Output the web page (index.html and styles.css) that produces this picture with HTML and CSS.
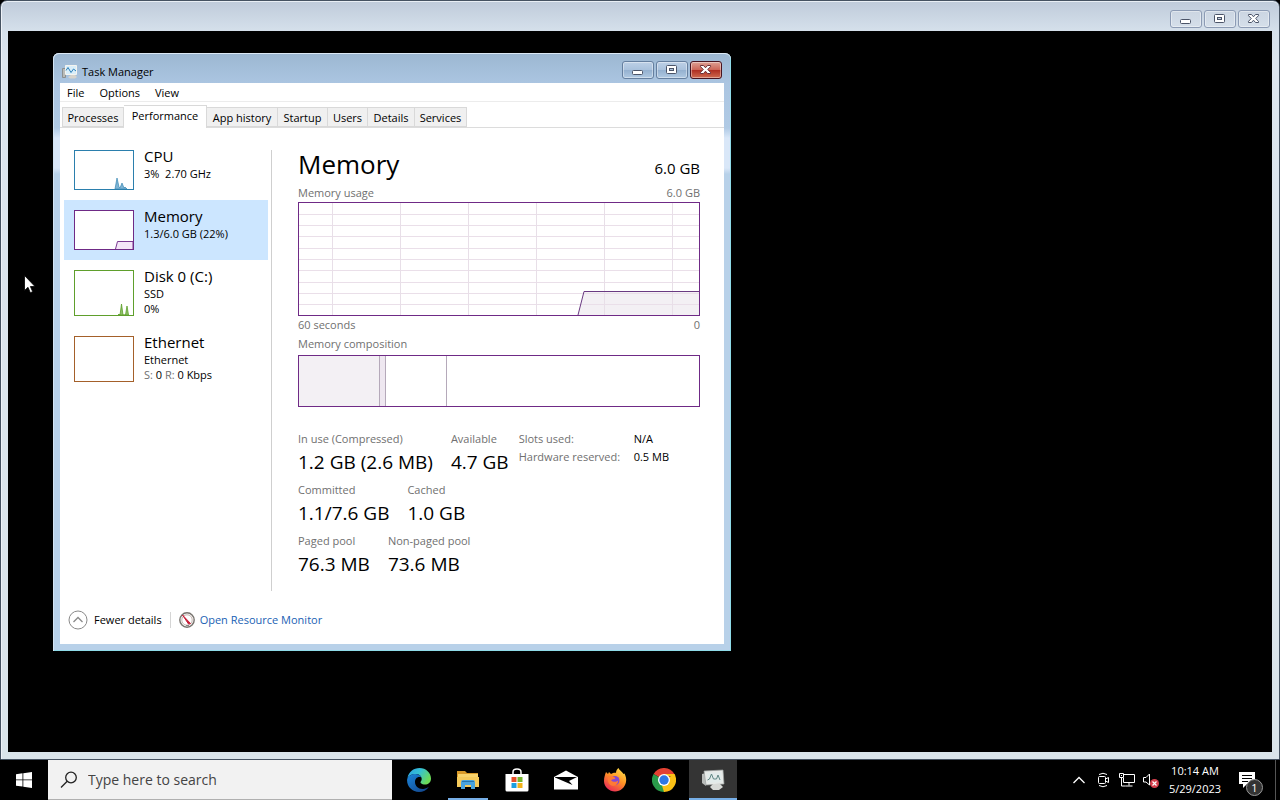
FILE: index.html
```html
<!DOCTYPE html>
<html lang="en">
<head>
    <meta charset="UTF-8">
    <meta name="viewport" content="width=device-width, initial-scale=1.0">
    <title>Task Manager</title>
    <link rel="stylesheet" href="styles.css">
</head>
<body>
    <main class="outer-window">
        <header class="outer-titlebar">
            <div class="window-controls">
                <button class="control" aria-label="Minimize">
                    <svg width="13" height="12" viewBox="0 0 13 12"><rect x="1.5" y="6.5" width="10" height="4" rx="1" fill="#fff" stroke="#4b5468"/></svg>
                </button>
                <button class="control" aria-label="Maximize">
                    <svg width="13" height="12" viewBox="0 0 13 12"><rect x="1.5" y="1.5" width="10" height="8" rx="1" fill="#fff" stroke="#4b5468"/><rect x="4.5" y="4.5" width="4" height="2" fill="#c8d4e2" stroke="#4b5468"/></svg>
                </button>
                <button class="control" aria-label="Close">
                    <svg width="13" height="12" viewBox="0 0 13 12"><path d="M1.5 1.5h3l2 2.3 2-2.3h3v1.2L8.7 5.5l2.8 2.8v1.2h-3l-2-2.3-2 2.3h-3V8.300l2.800-2.800-2.800-2.800z" fill="#fff" stroke="#4b5468"/></svg>
                </button>
            </div>
        </header>
        <div class="desktop">
            <section class="task-manager">
                <header class="titlebar">
                    <svg class="app-icon" width="16" height="16" viewBox="0 0 16 16">
                        <path d="M0.500 4.500h3v9h-3z" fill="#b9bbb8" stroke="#8c8f8e"/>
                        <path d="M3.500 1.500h11v9h-11z" fill="#d8eefa" stroke="#f4f4ef"/>
                        <path d="M4 6.500l2-3 3 5 2.500-3.500L14 7" fill="none" stroke="#2b7fb8"/>
                        <path d="M6 13l3-2h4l2 2-2 1.500H8z" fill="#d6d4cd"/>
                    </svg>
                    <h1>Task Manager</h1>
                    <div class="window-controls">
                        <button class="control" aria-label="Minimize">
                            <svg width="13" height="12" viewBox="0 0 13 12"><rect x="1.5" y="6.5" width="10" height="4" rx="1" fill="#fff" stroke="#4b5468"/></svg>
                        </button>
                        <button class="control" aria-label="Maximize">
                            <svg width="13" height="12" viewBox="0 0 13 12"><rect x="1.5" y="1.5" width="10" height="8" rx="1" fill="#fff" stroke="#4b5468"/><rect x="4.5" y="4.5" width="4" height="2" fill="#a9bfd8" stroke="#4b5468"/></svg>
                        </button>
                        <button class="control close" aria-label="Close">
                            <svg width="13" height="12" viewBox="0 0 13 12"><path d="M1.5 1.5h3l2 2.3 2-2.3h3v1.2L8.7 5.5l2.8 2.8v1.2h-3l-2-2.3-2 2.3h-3V8.300l2.800-2.800-2.800-2.800z" fill="#fff" stroke="#6b3038"/></svg>
                        </button>
                    </div>
                </header>

                <div class="client">
                    <nav class="menu">
                        <button>File</button>
                        <button>Options</button>
                        <button>View</button>
                    </nav>
                    <div class="tabs" role="tablist">
                        <button role="tab">Processes</button>
                        <button role="tab" class="active" aria-selected="true">Performance</button>
                        <button role="tab">App history</button>
                        <button role="tab">Startup</button>
                        <button role="tab">Users</button>
                        <button role="tab">Details</button>
                        <button role="tab">Services</button>
                    </div>

                    <div class="content">
                        <aside class="resources">
                            <button class="resource">
                                <svg class="thumb cpu" viewBox="0 0 58 38"><path d="M40 38l2-11 2 9 1 1 2-5 2 5 1-1 2 2z" fill="#7fb4d4" stroke="#3a88b4" stroke-width=".7"/></svg>
                                <span class="resource-text"><strong>CPU</strong><span>3%&nbsp; 2.70 GHz</span></span>
                            </button>
                            <button class="resource selected">
                                <svg class="thumb memory" viewBox="0 0 58 38"><path d="M40.500 38l2-7.500H58V38" fill="#f4e6f8" stroke="#7b3a93"/></svg>
                                <span class="resource-text"><strong>Memory</strong><span>1.3/6.0 GB (22%)</span></span>
                            </button>
                            <button class="resource tall">
                                <svg class="thumb disk" viewBox="0 0 58 44"><path d="M43 44l1-1 1 1 1.500-11L48 44h2.500L52 35l1.500 9z" fill="#8fbf68" stroke="#5da02a" stroke-width=".8"/></svg>
                                <span class="resource-text"><strong>Disk 0 (C:)</strong><span>SSD</span><span>0%</span></span>
                            </button>
                            <button class="resource tall">
                                <svg class="thumb ethernet" viewBox="0 0 58 44"></svg>
                                <span class="resource-text"><strong>Ethernet</strong><span>Ethernet</span><span><i>S:</i> 0 <i>R:</i> 0 Kbps</span></span>
                            </button>
                        </aside>

                        <section class="details">
                            <div class="heading">
                                <h2>Memory</h2>
                                <span>6.0 GB</span>
                            </div>
                            <div class="caption"><span>Memory usage</span><span>6.0 GB</span></div>
                            <svg class="usage" viewBox="0 0 400 112" preserveAspectRatio="none">
                                <path d="M279 112l6-23.500H400V112z" fill="#f3f0f4"/>
                                <path d="M0 11.500h400M0 22.500h400M0 33.500h400M0 45.500h400M0 56.500h400M0 67.500h400M0 79.500h400M0 90.500h400M0 101.500h400" stroke="#eadfe9"/>
                                <path d="M33.500 0v112M101.500 0v112M169.500 0v112M237.500 0v112M305.500 0v112M373.500 0v112" stroke="#e8dfe8"/>
                                <path d="M279 112l6-23.500H400" fill="none" stroke="#6a3a82"/>
                            </svg>
                            <div class="caption below"><span>60 seconds</span><span>0</span></div>
                            <div class="caption">Memory composition</div>
                            <div class="composition">
                                <div class="in-use"></div>
                                <div class="modified"></div>
                                <div class="standby"></div>
                            </div>

                            <div class="stats">
                                <div class="stats-main">
                                    <dl>
                                        <div><dt>In use (Compressed)</dt><dd>1.2 GB (2.6 MB)</dd></div>
                                        <div><dt>Available</dt><dd>4.7 GB</dd></div>
                                    </dl>
                                    <dl>
                                        <div><dt>Committed</dt><dd>1.1/7.6 GB</dd></div>
                                        <div><dt>Cached</dt><dd>1.0 GB</dd></div>
                                    </dl>
                                    <dl>
                                        <div><dt>Paged pool</dt><dd>76.3 MB</dd></div>
                                        <div><dt>Non-paged pool</dt><dd>73.6 MB</dd></div>
                                    </dl>
                                </div>
                                <table class="hardware">
                                    <tr><th scope="row">Slots used:</th><td>N/A</td></tr>
                                    <tr><th scope="row">Hardware reserved:</th><td>0.5 MB</td></tr>
                                </table>
                            </div>
                        </section>
                    </div>

                    <footer class="bottom-bar">
                        <button class="fewer">
                            <svg width="20" height="20" viewBox="0 0 20 20" fill="none" stroke="#8a8a8a"><circle cx="10" cy="10" r="9"/><path d="M5.500 12L10 7.500l4.500 4.500" stroke-width="1.300"/></svg>
                            Fewer details
                        </button>
                        <a href="#" class="monitor">
                            <svg width="16" height="16" viewBox="0 0 16 16"><circle cx="8" cy="8" r="7.200" fill="#f5f4f2" stroke="#77736e" stroke-width="1.400"/><circle cx="8" cy="8" r="5.200" fill="#fff" stroke="#c9b9b6"/><path d="M3.500 3l8 8.500-2 .5z" fill="#c8203a" stroke="#c8203a"/><path d="M7 13.500h3" stroke="#888"/></svg>
                            Open Resource Monitor
                        </a>
                    </footer>
                </div>
            </section>

            <svg class="cursor" width="12" height="19" viewBox="0 0 12 19"><path d="M.5.500v15l3.500-3.200 2.300 5.400 2.400-1-2.300-5.200h4.600z" fill="#fff" stroke="#000" stroke-width=".8"/></svg>
        </div>
    </main>

    <footer class="taskbar">
        <button class="start" aria-label="Start">
            <svg width="16" height="16" viewBox="0 0 16 16" fill="#fff"><path d="M0 2.200L6.500 1.300v6.200H0zM7.300 1.200L16 0v7.500H7.300zM0 8.300h6.500v6.300L0 13.700zM7.300 8.300H16V16l-8.700-1.200z"/></svg>
        </button>
        <label class="search">
            <svg width="18" height="18" viewBox="0 0 18 18" fill="none" stroke="#222" stroke-width="1.300"><circle cx="11" cy="6.500" r="5.300"/><path d="M7.200 10.300L1 16.500"/></svg>
            <input type="text" placeholder="Type here to search" aria-label="Search">
        </label>
        <nav class="apps">
            <button aria-label="Edge">
                <svg width="24" height="24" viewBox="0 0 24 24">
                    <defs>
                        <linearGradient id="edgeTop" x1="0" y1="0" x2="1" y2=".5"><stop offset="0" stop-color="#2d9fe4"/><stop offset=".5" stop-color="#35c1d5"/><stop offset="1" stop-color="#6bdb58"/></linearGradient>
                        <linearGradient id="edgeLow" x1="0" y1="0" x2="1" y2="1"><stop offset="0" stop-color="#1b86dc"/><stop offset="1" stop-color="#123f83"/></linearGradient>
                    </defs>
                    <path d="M.5 10C1.500 4 6.500 0 12.500 0 19 0 24 5 24 10.500c0 4-3 6-6 6-3.500 0-4.500-1.500-4.500-2.200 0-.8 1.200-1.300 1.200-3.300C14.700 8 12 6 8.500 6 5 6 2 7.500.5 10z" fill="url(#edgeTop)"/>
                    <path d="M.2 11C1 8 4.500 6 8.500 6c3 0 5.200 1.500 6 3.500-4-1.500-6.500 1.300-6.500 4.500 0 4.500 4.500 8 9.500 6.700 1.700-.4 3-1.200 4.400-2-2 3.500-6 5.300-9.900 5.300C5 24-.8 18 .2 11z" fill="url(#edgeLow)"/>
                </svg>
            </button>
            <button class="running" aria-label="File Explorer">
                <svg width="22" height="20" viewBox="0 0 22 20"><path d="M0 1h8l2 2h11v5H0z" fill="#d99a28"/><path d="M1 4h20v13H1z" fill="#f8d36c"/><path d="M0 7h22v10H0z" fill="#f5ca5b"/><path d="M4 19v-7q0-2 2-2h10q2 0 2 2v7h-4v-4H8v4z" fill="#49a3dd"/><path d="M5 11.500h12" stroke="#2474ad"/></svg>
            </button>
            <button aria-label="Microsoft Store">
                <svg width="24" height="24" viewBox="0 0 24 24"><path d="M8 7V4q0-3 4-3t4 3v3" fill="none" stroke="#fff" stroke-width="1.500"/><path d="M.5 6h23v16q0 1.500-1.500 1.500H2Q.5 23.500.5 22z" fill="#fff"/><path d="M6.500 9h5v5h-5z" fill="#e8502b"/><path d="M12.500 9h5v5h-5z" fill="#75b52b"/><path d="M6.500 15h5v5h-5z" fill="#1c9fe0"/><path d="M12.500 15h5v5h-5z" fill="#f2b21a"/></svg>
            </button>
            <button aria-label="Mail">
                <svg width="24" height="20" viewBox="0 0 24 20"><path d="M0 7L12 .5 24 7v12.500H0z" fill="#fff"/><path d="M1 7h22l-8 4 3.500 4L1 7.500z" fill="#000"/></svg>
            </button>
            <button aria-label="Firefox">
                <svg width="24" height="24" viewBox="0 0 24 24">
                    <defs><linearGradient id="fox" x1=".8" y1="0" x2=".2" y2="1"><stop offset="0" stop-color="#ffe04b"/><stop offset=".45" stop-color="#ff9224"/><stop offset="1" stop-color="#e8225d"/></linearGradient></defs>
                    <path d="M3 4l2 2 1-2 2 2c2-1.500 4-1.500 5-1.200C13 2 14.500 1 15.500 0c.5 2 3.500 3.500 5 6l1-.5C23 8.500 23.500 11 23 14c-1 5.500-5.500 9.500-11 9.500S1 19 1 13C1 9 2 7 3 4z" fill="url(#fox)"/>
                    <circle cx="12" cy="12.500" r="4.500" fill="#8448d4"/>
                    <path d="M5 9c3-1 5-1 7.500 1.200-1 1.300-3.500.8-4.300 2 1.300 2 4.800 2.300 7 .3-.5 4-3 5.500-5.500 5.300C6 17.500 4 13 5 9z" fill="#ff7a35"/>
                </svg>
            </button>
            <button aria-label="Chrome">
                <svg width="24" height="24" viewBox="0 0 24 24"><path d="M12 12L1.600 6A12 12 0 0 1 22.400 6z" fill="#e34132"/><path d="M12 12L22.400 6A12 12 0 0 1 12 24z" fill="#fbc116"/><path d="M12 12v12A12 12 0 0 1 1.600 6z" fill="#2a9b4a"/><path d="M12 6h10.400a12 12 0 0 1 .9 2H12z" fill="#fbc116"/><path d="M17.200 15L12 24l-2-6.500z" fill="#fbc116"/><circle cx="12" cy="12" r="6" fill="#fff"/><circle cx="12" cy="12" r="4.700" fill="#2f77e4"/></svg>
            </button>
            <button class="running current" aria-label="Task Manager">
                <svg width="24" height="22" viewBox="0 0 24 22"><path d="M1 5l4-1v13l-4-3z" fill="#b9bcba"/><path d="M3 2l19-1 1 14-18 1z" fill="#e6e9e7" stroke="#9ba09f" stroke-width=".7"/><path d="M6 4l14-.7.600 9.700L7 14z" fill="#e2ebea"/><path d="M6.500 11l2-1 2-5 2 5 3 0 1.500-4 2 5" fill="none" stroke="#5f8784"/><path d="M9 18l3-3h7l3 3-4 3h-6z" fill="#d7d9d6"/></svg>
            </button>
        </nav>
        <div class="tray">
            <button aria-label="Show hidden icons"><svg width="14" height="16" viewBox="0 0 14 16" fill="none" stroke="#fff" stroke-width="1.300"><path d="M1.500 11L7 5.500l5.500 5.500"/></svg></button>
            <button aria-label="Meet Now"><svg width="16" height="16" viewBox="0 0 16 16" fill="none" stroke="#fff"><rect x="3.500" y="4.500" width="7" height="7" rx="1"/><path d="M10.500 7l3-1.500v5l-3-1.500M4 2.500Q8 0 12 2.500M4 13.500q4 2.500 8 0"/></svg></button>
            <button aria-label="Network"><svg width="18" height="16" viewBox="0 0 18 16" fill="none" stroke="#fff"><path d="M6 2.500h10.500v8H5.500V6M11 10.500v3M7.500 14h7"/><path d="M1.500 1.500h4v4h-4zM3.500 5.500V14h4M3.500 3v1"/></svg></button>
            <button aria-label="Volume"><svg width="18" height="16" viewBox="0 0 18 16"><path d="M1.500 5.500H4l3.500-3.500v11L4 10H1.500z" fill="none" stroke="#fff"/><circle cx="12.500" cy="11.500" r="4.500" fill="#d43f4c"/><path d="M10.500 9.500l4 4M14.500 9.500l-4 4" stroke="#fff" stroke-width="1.200"/></svg></button>
            <button class="clock"><span>10:14 AM</span><span>5/29/2023</span></button>
            <button class="notifications" aria-label="Notifications">
                <svg width="18" height="18" viewBox="0 0 18 18"><path d="M1 1h16v12H9l-4 4v-4H1z" fill="#fff"/><path d="M4 4.500h10M4 7.500h10M4 10.500h6" stroke="#000"/></svg>
                <span class="badge">1</span>
            </button>
        </div>
    </footer>
</body>
</html>
```

FILE: styles.css
```css
:root {
    --purple: #6f2a86;
    --label: #707070;
}

* {
    box-sizing: border-box;
    margin: 0;
    padding: 0;
}

body {
    display: flex;
    flex-direction: column;
    height: 100vh;
    overflow: hidden;
    background: #000;
    font-family: "Open Sans", "Noto Sans", sans-serif;
    font-size: 11px;
    line-height: 16px;
    color: #000;
}

button,
input {
    font: inherit;
    color: inherit;
    background: none;
    border: none;
}

svg {
    display: block;
    flex: none;
}

/* Outer window */
.outer-window {
    flex: 1;
    display: flex;
    flex-direction: column;
    padding: 0 7px 7px;
    background: linear-gradient(#bfcbda, #d5e0eb 30px, #dce5ee 60px, #dae4ea);
    border: 1px solid #465362;
    border-radius: 7px 7px 0 0;
    box-shadow: inset 0 1px #e9eff5, inset 1px 0 #eef2f8;
}

.outer-titlebar {
    display: flex;
    justify-content: flex-end;
    height: 30px;
    padding: 9px 2px 0 0;
}

.window-controls {
    display: flex;
    gap: 2px;
}

.control {
    display: flex;
    align-items: center;
    justify-content: center;
    width: 32px;
    height: 18px;
    padding: 0 1px 1px 0;
    border: 1px solid #8c9bb4;
    border-radius: 3px;
    background: linear-gradient(#cbd5e2, #d5dfea);
    box-shadow: inset 0 0 0 1px rgba(255, 255, 255, 0.4);
}

.desktop {
    position: relative;
    flex: 1;
    background: #000;
}

.cursor {
    position: absolute;
    left: 16px;
    top: 244px;
}

/* Task Manager window */
.task-manager {
    position: absolute;
    left: 45px;
    top: 22px;
    width: 678px;
    height: 598px;
    display: flex;
    flex-direction: column;
    padding: 0 7px 7px;
    background: linear-gradient(#9cb7d1, #abc5e1 30px, #b0cae5 75px, #d9e7f8 85px, #d9e7f8 115px, #b8d1e9 121px, #b8d1e9);
    border-radius: 6px 6px 0 0;
    box-shadow: inset 0 1px #dce9f5, inset 1px 0 #d3e4f3, inset -1px -1px #8fdbe8;
}

.titlebar {
    display: flex;
    align-items: flex-start;
    height: 30px;
    padding: 9px 2px 0;
}

.titlebar .window-controls {
    margin-top: -1px;
}

.app-icon {
    margin-top: 2px;
}

.titlebar h1 {
    flex: 1;
    margin: 2px 0 0 4px;
    font-size: 11px;
    font-weight: 400;
    line-height: 16px;
}

.task-manager .control {
    border-color: #657f9f;
    background: linear-gradient(#bdd0e6, #a9c1dc 50%, #94b0cf 50%, #b0c9e2);
}

.task-manager .control.close {
    border-color: #481420;
    background: linear-gradient(#dda094, #cc6456 50%, #ae2c20 50%, #cf6b50);
}

.client {
    flex: 1;
    display: flex;
    flex-direction: column;
    background: #fff;
}

.menu {
    display: flex;
    gap: 15px;
    height: 19px;
    padding: 2px 7px 0;
    border-bottom: 1px solid #ececec;
}

.tabs {
    display: grid;
    grid-template-columns: 62px 83px 71px 50px 40px 47px 52px;
    align-items: end;
    height: 26px;
    padding-left: 2px;
    border-bottom: 1px solid #dcdcdc;
}

.tabs button {
    height: 20px;
    padding-top: 1px;
    white-space: nowrap;
    background: #f0f0f0;
    border: 1px solid #d9d9d9;
    border-left: none;
}

.tabs button:first-child {
    border-left: 1px solid #d9d9d9;
}

.tabs .active {
    height: 23px;
    margin-bottom: -1px;
    padding-bottom: 3px;
    background: #fff;
    border-bottom: none;
}

.content {
    flex: 1;
    display: flex;
}

.resources {
    width: 212px;
    margin: 22px 0 0;
    padding-left: 4px;
    border-right: 1px solid #cfcfcf;
}

.resource {
    display: flex;
    gap: 10px;
    width: 204px;
    height: 60px;
    padding: 10px;
    text-align: left;
}

.resource:first-child {
    margin-top: -10px;
}

.resource.tall {
    height: 66px;
}

.resource.selected {
    background: #cce6ff;
}

.thumb {
    width: 60px;
    height: 40px;
    background: #fff;
    border: 1px solid;
}

.tall .thumb {
    height: 46px;
}

.cpu { border-color: #2b7fad; }
.memory { border-color: var(--purple); }
.disk { border-color: #5f9f2c; }
.ethernet { border-color: #a4602a; }

.resource-text {
    display: flex;
    flex-direction: column;
    line-height: 15px;
}

.resource-text strong {
    height: 16px;
    font-size: 15px;
    font-weight: 400;
    line-height: 12px;
}

.resource-text i {
    font-style: normal;
    color: var(--label);
}

.details {
    flex: 1;
    padding: 18px 24px 0 26px;
}

.heading {
    display: flex;
    justify-content: space-between;
    align-items: baseline;
    height: 39px;
}

.heading h2 {
    font-size: 26px;
    font-weight: 400;
    line-height: 37px;
}

.heading span {
    font-size: 15px;
}

.caption {
    display: flex;
    justify-content: space-between;
    height: 17px;
    color: var(--label);
}

.caption.below {
    height: 20px;
    padding-top: 1px;
}

.usage {
    width: 100%;
    height: 114px;
    border: 1px solid var(--purple);
}

.composition {
    display: flex;
    height: 52px;
    margin-top: 2px;
    border: 1px solid var(--purple);
}

.composition div {
    border-right: 1px solid #b5a9ba;
}

.in-use {
    width: 81px;
    background: #f3f0f4;
}

.modified {
    width: 6px;
    background: #eee7f0;
}

.standby {
    width: 61px;
}

.stats {
    display: flex;
    gap: 10px;
    margin-top: 24px;
}

.stats dl {
    display: flex;
    gap: 18px;
    height: 51px;
}

.stats dt {
    line-height: 16px;
    color: var(--label);
}

.stats dd {
    font-size: 19px;
    line-height: 30px;
    white-space: nowrap;
}

.hardware {
    align-self: flex-start;
    border-collapse: collapse;
    white-space: nowrap;
}

.hardware th {
    width: 115px;
    height: 18px;
    font-weight: 400;
    text-align: left;
    vertical-align: top;
    color: var(--label);
}

.hardware td {
    vertical-align: top;
}

.bottom-bar {
    display: flex;
    align-items: center;
    height: 53px;
    padding: 4px 7px 0 8px;
}

.fewer {
    display: flex;
    align-items: center;
    gap: 6px;
    padding-right: 8px;
}

.monitor {
    display: flex;
    align-items: center;
    gap: 5px;
    padding-left: 8px;
    border-left: 1px solid #d5d5d5;
    color: #1a5fb4;
    text-decoration: none;
}

/* Taskbar */
.taskbar {
    display: flex;
    height: 40px;
    color: #fff;
}

.start {
    display: flex;
    align-items: center;
    justify-content: center;
    width: 48px;
}

.search {
    display: flex;
    align-items: center;
    gap: 10px;
    width: 344px;
    padding-left: 12px;
    background: #f2f2f2;
    border-bottom: 1px solid #b0b0b0;
}

.search input {
    flex: 1;
    min-width: 0;
    font-size: 14px;
    line-height: 20px;
    color: #333;
}

.search input::placeholder {
    color: #444;
    opacity: 1;
}

.apps {
    display: flex;
    gap: 1px;
    margin-left: 3px;
}

.apps button {
    display: flex;
    align-items: center;
    justify-content: center;
    width: 48px;
    background: linear-gradient(#76aee6, #76aee6) center bottom / 0 2px no-repeat;
}

.apps .running {
    background-size: 40px 2px;
}

.apps .current {
    background-color: #343434;
    background-size: 48px 2px;
}

.tray {
    display: flex;
    align-items: stretch;
    margin-left: auto;
    padding-right: 4px;
}

.tray button {
    display: flex;
    align-items: center;
    justify-content: center;
    width: 24px;
}

.tray .clock {
    flex-direction: column;
    width: 64px;
    line-height: 18px;
}

.tray .notifications {
    position: relative;
    width: 49px;
    padding-right: 8px;
    border-right: 1px solid #555;
}

.badge {
    position: absolute;
    right: 12px;
    bottom: 4px;
    width: 17px;
    height: 17px;
    border: 1px solid #999;
    border-radius: 50%;
    background: #333;
    line-height: 15px;
    text-align: center;
}
```
